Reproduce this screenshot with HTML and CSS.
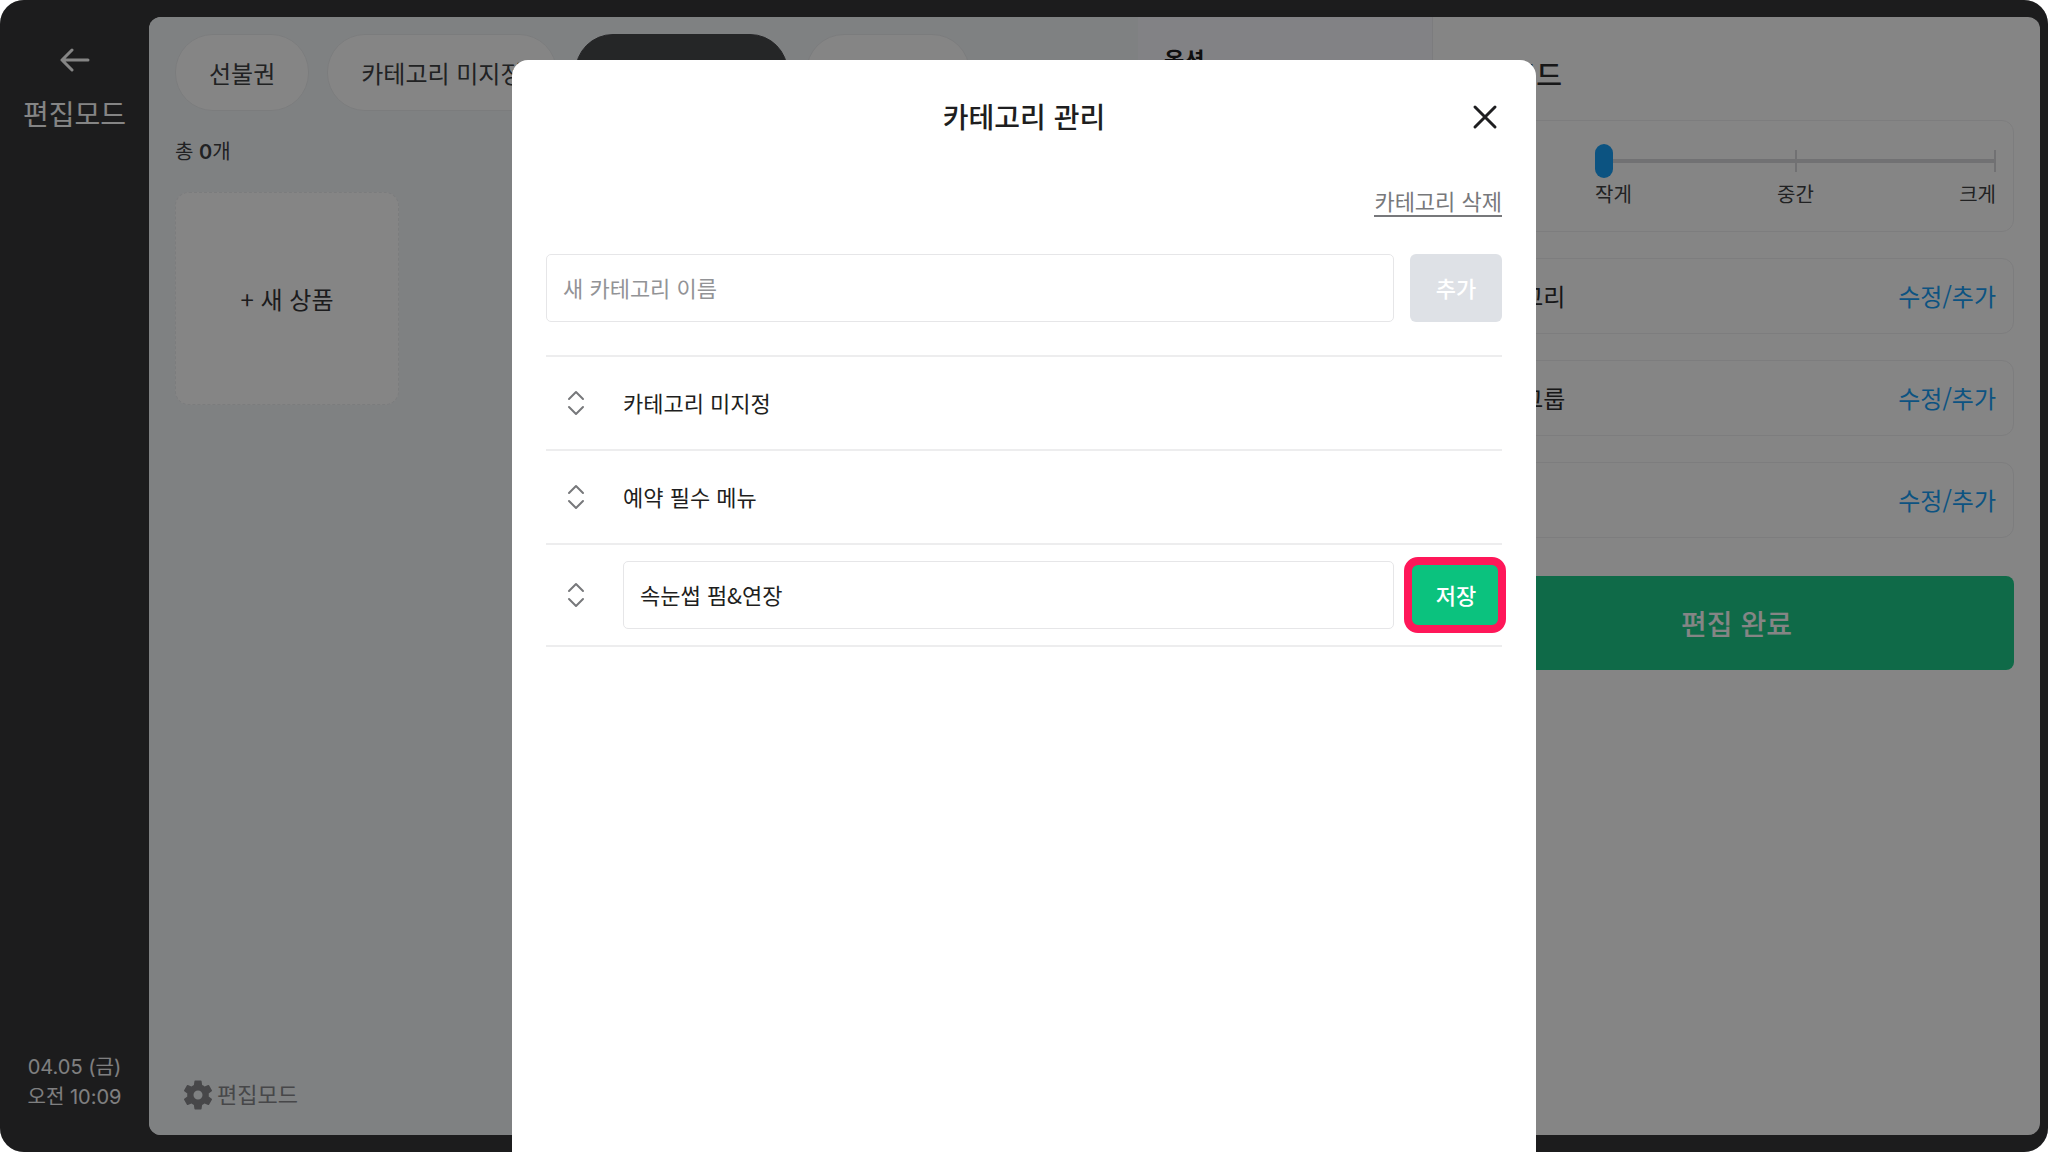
FILE: index.html
```html
<!DOCTYPE html>
<html lang="ko">
<head>
<meta charset="utf-8">
<meta name="viewport" content="width=device-width, initial-scale=1">
<title>카테고리 관리</title>
<link rel="stylesheet" href="styles.css">
</head>
<body>
<div class="app">
  <aside class="sidebar">
    <button class="back" type="button" aria-label="뒤로">
      <svg width="30" height="24" viewBox="0 0 30 24" fill="none" stroke="currentColor" stroke-width="3" stroke-linecap="round" stroke-linejoin="round"><path d="M28 12H2M12 2 2 12l10 10"/></svg>
    </button>
    <p class="mode">편집모드</p>
    <p class="clock">04.05 (금)<br>오전 10:09</p>
  </aside>

  <main class="workspace">
    <section class="products">
      <nav class="tabs">
        <button class="tab" type="button">선불권</button>
        <button class="tab" type="button">카테고리 미지정</button>
        <button class="tab tab-active" type="button">예약 필수 메뉴</button>
        <button class="tab" type="button">속눈썹 펌</button>
      </nav>
      <p class="count">총 <b>0</b>개</p>
      <button class="new-product" type="button">+ 새 상품</button>
      <button class="edit-mode" type="button">
        <svg width="30" height="30" viewBox="2 2 20 20" fill="currentColor"><path d="M19.14 12.94c.04-.3.06-.61.06-.94s-.02-.64-.07-.94l2.03-1.58a.49.49 0 0 0 .12-.61l-1.92-3.32a.49.49 0 0 0-.59-.22l-2.39.96a7 7 0 0 0-1.62-.94l-.36-2.54a.48.48 0 0 0-.48-.41h-3.84a.47.47 0 0 0-.47.41l-.36 2.54c-.59.24-1.13.57-1.62.94l-2.39-.96a.47.47 0 0 0-.59.22L2.74 8.87a.47.47 0 0 0 .12.61l2.03 1.58c-.05.3-.09.63-.09.94s.02.64.07.94l-2.03 1.58a.49.49 0 0 0-.12.61l1.92 3.32c.12.22.37.29.59.22l2.39-.96c.5.38 1.03.7 1.62.94l.36 2.54c.05.24.24.41.48.41h3.84c.24 0 .44-.17.47-.41l.36-2.54a7 7 0 0 0 1.62-.94l2.39.96c.22.08.47 0 .59-.22l1.92-3.32a.47.47 0 0 0-.12-.61zM12 15a3 3 0 1 1 0-6 3 3 0 0 1 0 6z"/></svg>
        <span>편집모드</span>
      </button>
    </section>

    <section class="options"><h2 class="options-title">옵션</h2></section>

    <section class="settings">
      <h2 class="settings-title">편집모드</h2>
      <div class="card card-size">
        <div class="size-control">
          <input class="slider" type="range" min="0" max="2" value="0" aria-label="크기">
          <div class="size-labels"><span>작게</span><span>중간</span><span>크게</span></div>
        </div>
      </div>
      <div class="card"><span>카테고리</span><a class="edit" href="#">수정/추가</a></div>
      <div class="card"><span>옵션그룹</span><a class="edit" href="#">수정/추가</a></div>
      <div class="card"><span>할인</span><a class="edit" href="#">수정/추가</a></div>
      <button class="done" type="button">편집 완료</button>
    </section>
  </main>
  <div class="backdrop"></div>
</div>

<div class="modal" role="dialog" aria-modal="true" aria-labelledby="modal-title">
  <header class="modal-header">
    <h1 class="modal-title" id="modal-title">카테고리 관리</h1>
    <button class="close" type="button" aria-label="닫기">
      <svg width="26" height="26" viewBox="0 0 26 26" fill="none" stroke="currentColor" stroke-width="3" stroke-linecap="round"><path d="M3 3l20 20M23 3 3 23"/></svg>
    </button>
  </header>
  <a class="delete" href="#">카테고리 삭제</a>
  <form class="add">
    <input class="field" type="text" aria-label="새 카테고리 이름" placeholder="새 카테고리 이름">
    <button class="action" type="button" disabled>추가</button>
  </form>
  <ul class="list">
    <li class="row">
      <svg class="sort" width="18" height="26" viewBox="0 0 18 26" fill="none" stroke="currentColor" stroke-width="2" stroke-linecap="round" stroke-linejoin="round"><path d="M2 9l7-7 7 7M2 17l7 7 7-7"/></svg>
      <span class="name">카테고리 미지정</span>
    </li>
    <li class="row">
      <svg class="sort" width="18" height="26" viewBox="0 0 18 26" fill="none" stroke="currentColor" stroke-width="2" stroke-linecap="round" stroke-linejoin="round"><path d="M2 9l7-7 7 7M2 17l7 7 7-7"/></svg>
      <span class="name">예약 필수 메뉴</span>
    </li>
    <li class="row row-editing">
      <svg class="sort" width="18" height="26" viewBox="0 0 18 26" fill="none" stroke="currentColor" stroke-width="2" stroke-linecap="round" stroke-linejoin="round"><path d="M2 9l7-7 7 7M2 17l7 7 7-7"/></svg>
      <input class="field" type="text" aria-label="카테고리 이름" value="속눈썹 펌&amp;연장">
      <button class="action save" type="button">저장</button>
    </li>
  </ul>
</div>
</body>
</html>
```

FILE: styles.css
```css
* { box-sizing: border-box; }

body {
  margin: 0;
  background: #fff;
  color: #1e1e20;
  font-family: "Noto Sans CJK KR", sans-serif;
  font-size: 22px;
  line-height: 32px;
}

h1, h2, p, ul { margin: 0; padding: 0; }
button, input { font: inherit; color: inherit; }
button { border: 0; padding: 0; background: none; }
svg { display: block; flex: none; }

.app {
  position: relative;
  display: flex;
  min-height: 100vh;
  padding: 17px 8px 17px 0;
  border-radius: 24px;
  overflow: hidden;
  background: #363638;
}

.backdrop {
  position: absolute;
  inset: 0;
  background: rgba(0, 0, 0, .48);
}

/* Sidebar */
.sidebar {
  display: flex;
  flex-direction: column;
  align-items: center;
  width: 149px;
  padding: 31px 0 23px;
  color: #fff;
}
.mode {
  margin-top: 21px;
  font-size: 28px;
  line-height: 40px;
}
.clock {
  margin-top: auto;
  color: #f4f4f6;
  font-family: Inter, "Noto Sans CJK KR", sans-serif;
  font-size: 20px;
  line-height: 30px;
  text-align: center;
}

/* Workspace */
.workspace {
  flex: 1;
  display: grid;
  grid-template-columns: 1fr 295px 607px;
  border-radius: 12px;
  overflow: hidden;
  background: #fff;
}
.products {
  display: flex;
  flex-direction: column;
  align-items: flex-start;
  min-width: 0;
  padding: 17px 26px 22px;
  background: #f4f7fa;
}
.tabs { display: flex; gap: 18px; }
.tab {
  height: 77px;
  padding: 0 33px;
  border: 1px solid #eceef0;
  border-radius: 38px;
  background: #fff;
  color: #404144;
  font-size: 24px;
  white-space: nowrap;
}
.tab-active { background: #48494c; border-color: #48494c; color: #fff; }
.count {
  margin-top: 25px;
  color: #404144;
  font-family: Inter, "Noto Sans CJK KR", sans-serif;
  font-size: 20px;
}
.count b { font-weight: 600; }
.new-product {
  width: 224px;
  height: 213px;
  margin-top: 24px;
  border: 1px dashed #eceef0;
  border-radius: 14px;
  background: #fff;
  color: #363638;
  font-size: 24px;
}
.edit-mode {
  display: flex;
  align-items: center;
  gap: 4px;
  margin-top: auto;
  margin-left: 8px;
  color: #88898c;
}
.edit-mode span { padding-bottom: 4px; }

.options {
  padding: 25px 26px;
  border-right: 1px solid #eeeef2;
  background: #fafaff;
}
.options-title { font-size: 22px; font-weight: 700; line-height: 32px; }

.settings {
  display: flex;
  flex-direction: column;
  gap: 26px;
  padding: 38px 26px 26px;
  color: #2c2c2e;
}
.settings-title {
  font-size: 28px;
  font-weight: 500;
  line-height: 39px;
}
.card {
  display: flex;
  align-items: center;
  justify-content: space-between;
  height: 76px;
  padding: 0 17px;
  border: 1px solid #f0f0f2;
  border-radius: 12px;
  font-size: 24px;
}
.card-size { height: 112px; justify-content: flex-end; }
.edit { color: #18a0f8; text-decoration: none; }
.size-control { width: 401px; margin-top: 2px; }
.slider {
  appearance: none;
  display: block;
  width: 100%;
  height: 34px;
  margin: 0;
  background:
    linear-gradient(#d8d9dc, #d8d9dc) 200px 6px / 2px 22px no-repeat,
    linear-gradient(#d8d9dc, #d8d9dc) 100% 6px / 2px 22px no-repeat,
    linear-gradient(#d8d9dc, #d8d9dc) 0 50% / 100% 4px no-repeat;
}
.slider::-webkit-slider-thumb {
  appearance: none;
  width: 18px;
  height: 34px;
  border-radius: 9px;
  background: #18a0f8;
}
.size-labels {
  display: flex;
  justify-content: space-between;
  font-size: 20px;
  line-height: 32px;
  color: #404144;
}
.done {
  height: 94px;
  margin-top: 12px;
  border-radius: 8px;
  background: #1dcc8a;
  color: #fff;
  font-size: 28px;
  font-weight: 500;
}

/* Category dialog */
.modal {
  position: absolute;
  top: 60px;
  bottom: 0;
  left: 25%;
  width: 50%;
  display: flex;
  flex-direction: column;
  padding: 36px 34px;
  border-radius: 16px 16px 0 0;
  background: #fff;
}
.modal-header {
  display: grid;
  grid-template-columns: 1fr auto 1fr;
  align-items: center;
}
.modal-title {
  grid-column: 2;
  padding-bottom: 2px;
  font-size: 28px;
  font-weight: 500;
  line-height: 40px;
}
.close { justify-self: end; margin-right: 4px; }
.delete {
  align-self: flex-end;
  margin-top: 48px;
  border-bottom: 2px solid #77787b;
  color: #77787b;
  line-height: 29px;
  text-decoration: none;
}
.add {
  display: flex;
  gap: 16px;
  margin-top: 37px;
}
.field {
  flex: 1;
  min-width: 0;
  height: 68px;
  padding: 0 16px 3px;
  border: 1px solid #e6e6e8;
  border-radius: 5px;
  background: #fff;
}
.field::placeholder { color: #929396; }
.action {
  position: relative;
  width: 92px;
  height: 68px;
  padding-bottom: 3px;
  border-radius: 6px;
  background: #dee1e6;
  color: #fff;
  font-weight: 500;
}
.list {
  margin-top: 33px;
  border-top: 2px solid #ededee;
  list-style: none;
}
.row {
  display: flex;
  align-items: center;
  height: 94px;
  padding-left: 21px;
  border-bottom: 2px solid #ededee;
}
.row-editing { height: 102px; }
.name { padding-bottom: 3px; }
.sort { margin-right: 38px; color: #77787b; }
.save { margin-left: 16px; background: #0bc27e; }
.save::after {
  content: "";
  position: absolute;
  inset: -4px -4px -4px -6px;
  border: 8px solid #ff1759;
  border-radius: 14px;
}
```
